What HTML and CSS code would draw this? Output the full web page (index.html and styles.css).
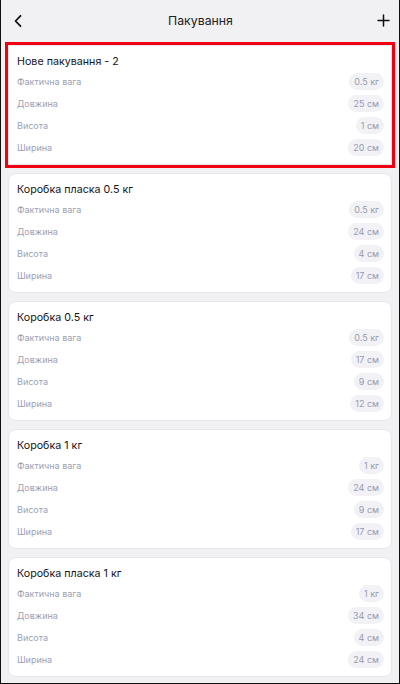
FILE: index.html
```html
<!DOCTYPE html>
<html lang="uk">
<head>
<meta charset="utf-8">
<title>Пакування</title>
<link rel="stylesheet" href="styles.css">
</head>
<body>
<div class="screen">
  <header class="topbar">
    <button class="icon-btn" aria-label="Назад">
      <svg width="10" height="14" viewBox="0 0 10 14"><path d="M7.5 1.8 L2.5 7 L7.5 12.2" fill="none" stroke="#111" stroke-width="1.8" stroke-linecap="round" stroke-linejoin="round"/></svg>
    </button>
    <h1 class="title">Пакування</h1>
    <button class="icon-btn" aria-label="Додати">
      <svg width="13" height="13" viewBox="0 0 13 13"><path d="M6.5 1 V12 M1 6.5 H12" fill="none" stroke="#111" stroke-width="1.5" stroke-linecap="round"/></svg>
    </button>
  </header>
  <main class="list">
    <section class="card card-selected">
      <h2 class="card-title">Нове пакування - 2</h2>
      <div class="row"><span class="label">Фактична вага</span><span class="pill">0.5 кг</span></div>
      <div class="row"><span class="label">Довжина</span><span class="pill">25 см</span></div>
      <div class="row"><span class="label">Висота</span><span class="pill">1 см</span></div>
      <div class="row"><span class="label">Ширина</span><span class="pill">20 см</span></div>
    </section>
    <section class="card">
      <h2 class="card-title">Коробка пласка 0.5 кг</h2>
      <div class="row"><span class="label">Фактична вага</span><span class="pill">0.5 кг</span></div>
      <div class="row"><span class="label">Довжина</span><span class="pill">24 см</span></div>
      <div class="row"><span class="label">Висота</span><span class="pill">4 см</span></div>
      <div class="row"><span class="label">Ширина</span><span class="pill">17 см</span></div>
    </section>
    <section class="card">
      <h2 class="card-title">Коробка 0.5 кг</h2>
      <div class="row"><span class="label">Фактична вага</span><span class="pill">0.5 кг</span></div>
      <div class="row"><span class="label">Довжина</span><span class="pill">17 см</span></div>
      <div class="row"><span class="label">Висота</span><span class="pill">9 см</span></div>
      <div class="row"><span class="label">Ширина</span><span class="pill">12 см</span></div>
    </section>
    <section class="card">
      <h2 class="card-title">Коробка 1 кг</h2>
      <div class="row"><span class="label">Фактична вага</span><span class="pill">1 кг</span></div>
      <div class="row"><span class="label">Довжина</span><span class="pill">24 см</span></div>
      <div class="row"><span class="label">Висота</span><span class="pill">9 см</span></div>
      <div class="row"><span class="label">Ширина</span><span class="pill">17 см</span></div>
    </section>
    <section class="card">
      <h2 class="card-title">Коробка пласка 1 кг</h2>
      <div class="row"><span class="label">Фактична вага</span><span class="pill">1 кг</span></div>
      <div class="row"><span class="label">Довжина</span><span class="pill">34 см</span></div>
      <div class="row"><span class="label">Висота</span><span class="pill">4 см</span></div>
      <div class="row"><span class="label">Ширина</span><span class="pill">24 см</span></div>
    </section>
  </main>
</div>
</body>
</html>
```
FILE: styles.css
```css
* { box-sizing: border-box; }
html, body {
  margin: 0;
  padding: 0;
  background: #f1f1f3;
}
body {
  font-family: Inter, Roboto, "Noto Sans", sans-serif;
  color: #111;
}
.screen {
  width: 400px;
  height: 684px;
  overflow: hidden;
  border: 1px solid #111;
  border-top: none;
  background: #f1f1f3;
}
.topbar {
  height: 37px;
  display: flex;
  align-items: center;
  justify-content: space-between;
  padding: 4px 7px 0 8px;
}
.icon-btn {
  width: 18px;
  height: 18px;
  padding: 0;
  border: 0;
  background: none;
  display: flex;
  align-items: center;
  justify-content: center;
}
.title {
  margin: 0;
  font-size: 12.3px;
  font-weight: 400;
  line-height: 18px;
  color: #222;
}
.list {
  display: flex;
  flex-direction: column;
  gap: 8px;
  padding: 8px 7px 0 7px;
}
.card {
  height: 120px;
  flex: none;
  background: #fff;
  border: 1px solid #e7e7eb;
  border-radius: 8px;
  padding: 7px 7px 5px 8px;
}
.card-selected {
  border-radius: 0;
  box-shadow: 0 0 0 3px #f00010;
}
.card-title {
  margin: 0;
  font-size: 10.7px;
  font-weight: 400;
  line-height: 17px;
  color: #161616;
}
.row {
  height: 22px;
  display: flex;
  align-items: center;
  justify-content: space-between;
}
.label {
  font-size: 9px;
  color: #9b9fb3;
}
.pill {
  font-size: 9px;
  line-height: 17px;
  height: 17px;
  padding: 0 5px;
  border-radius: 9px;
  background: #f2f2f6;
  color: #969bb0;
}
```
